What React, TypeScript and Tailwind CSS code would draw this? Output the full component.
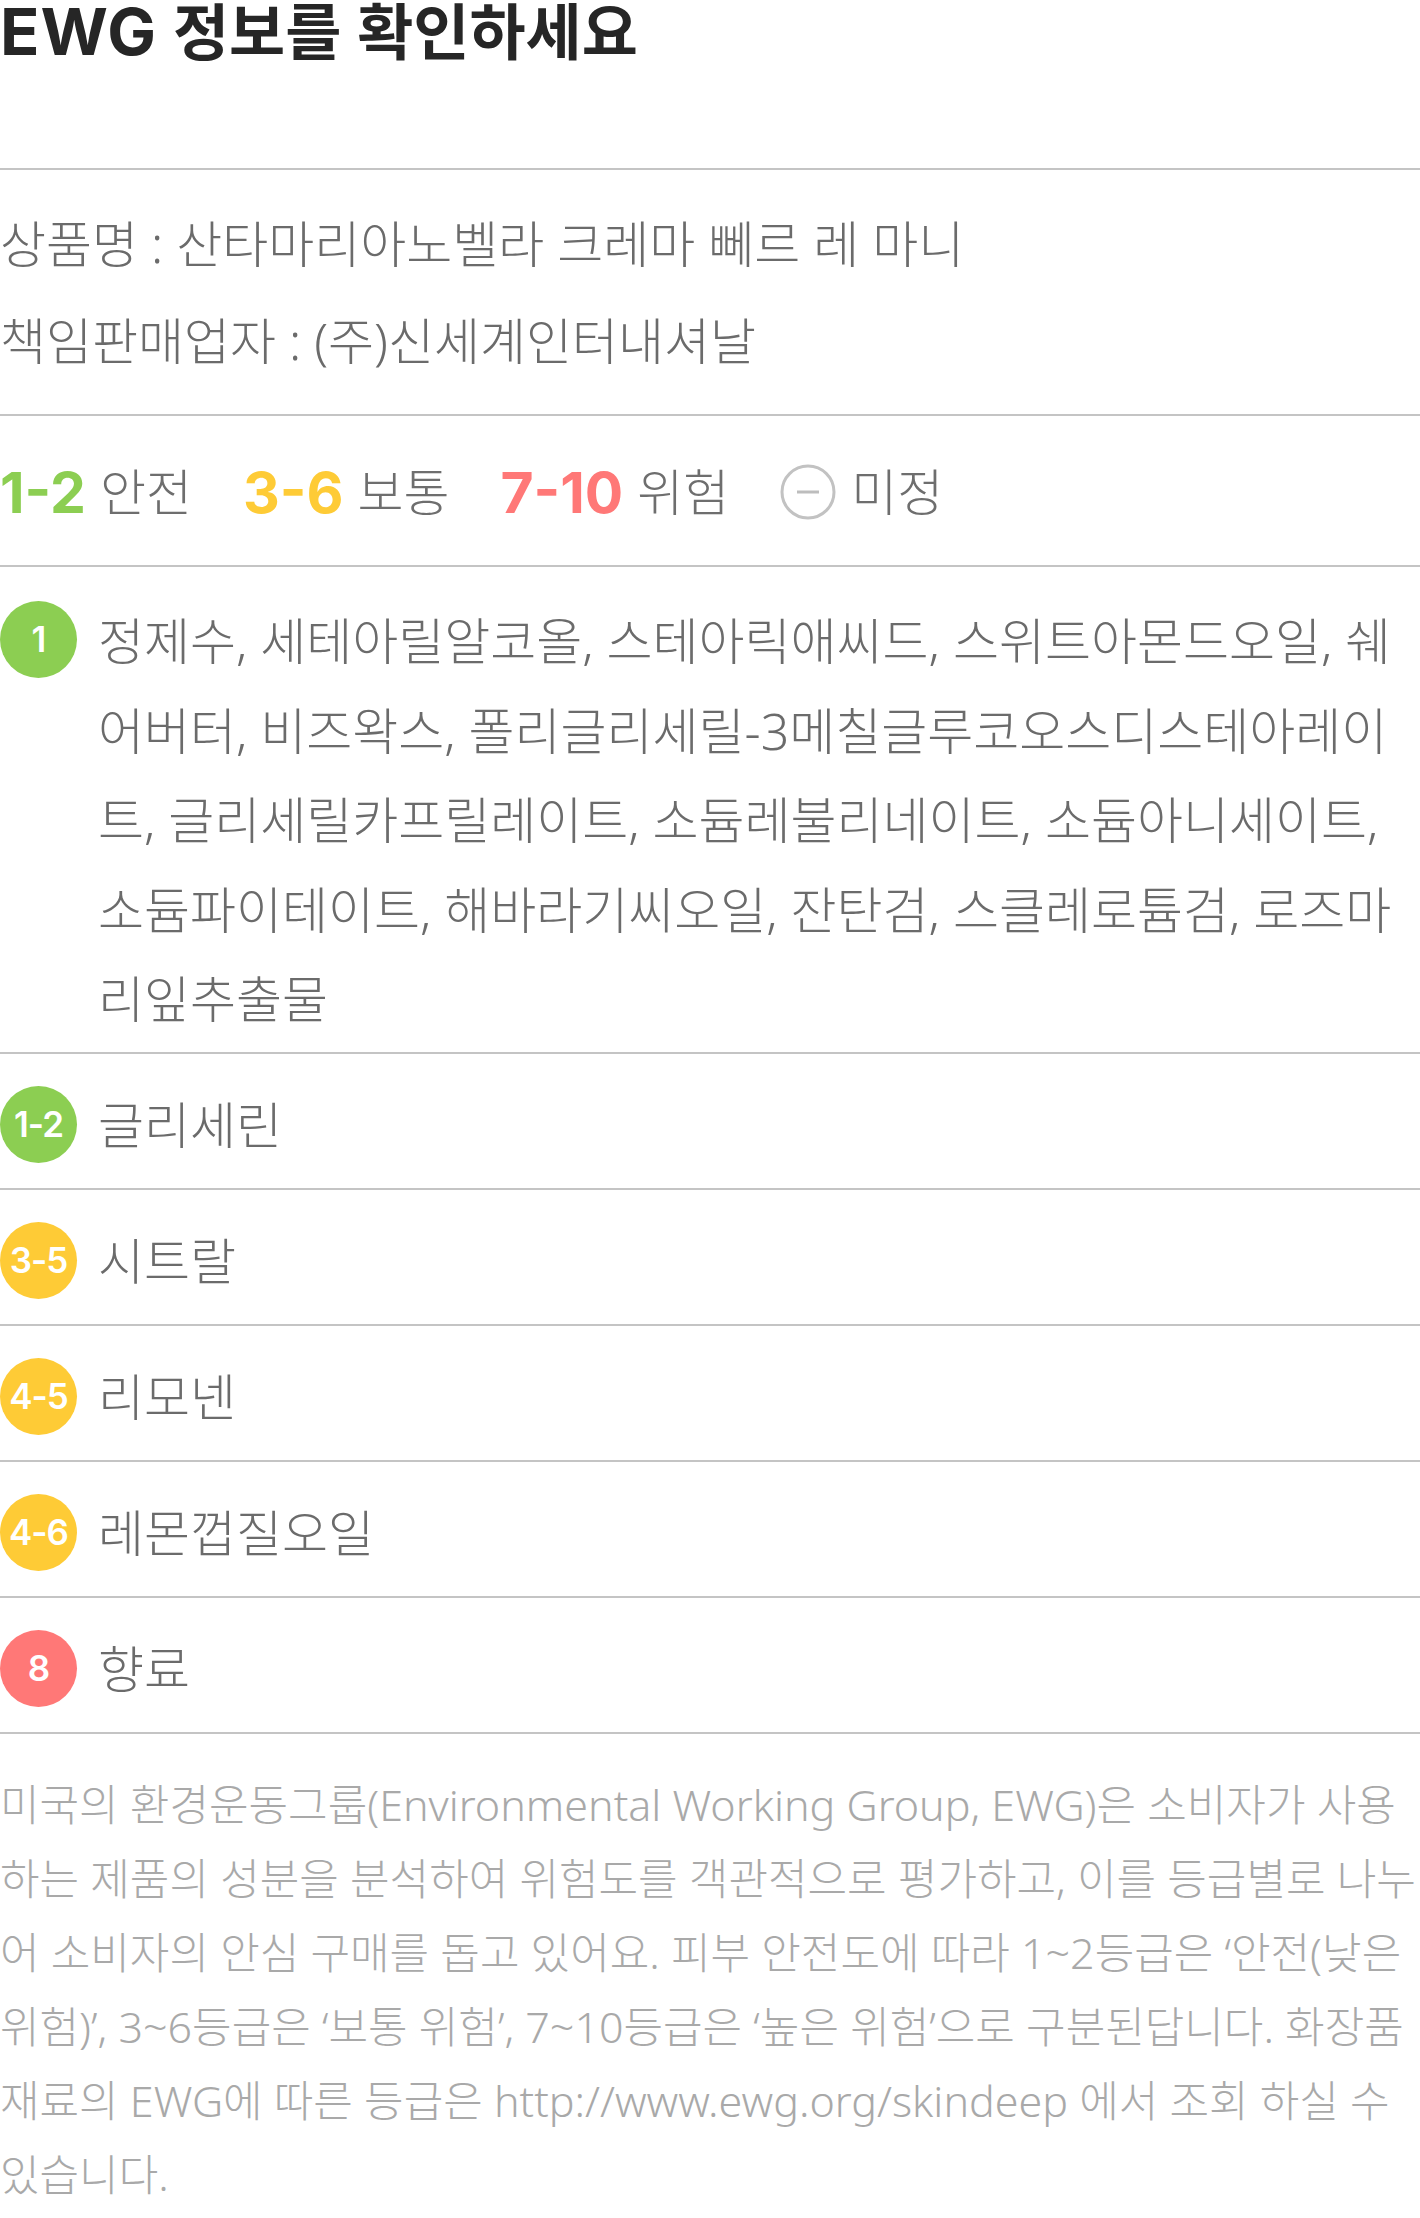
import React from "react";

const body = "font-['Noto_Sans','Noto_Sans_CJK_KR',sans-serif]";
const num = "font-['Inter','Noto_Sans',sans-serif]";

type Item = { grade: string; bg: string; name: string };

const items: Item[] = [
  { grade: "1-2", bg: "bg-[#8cce52]", name: "글리세린" },
  { grade: "3-5", bg: "bg-[#fecb36]", name: "시트랄" },
  { grade: "4-5", bg: "bg-[#fecb36]", name: "리모넨" },
  { grade: "4-6", bg: "bg-[#fecb36]", name: "레몬껍질오일" },
  { grade: "8", bg: "bg-[#ff7877]", name: "향료" },
];

function Badge({ grade, bg }: { grade: string; bg: string }) {
  return (
    <div
      className={`flex h-[77px] w-[77px] shrink-0 items-center justify-center rounded-full ${bg} ${num} text-[35px] font-semibold leading-none tracking-[-1px] text-white`}
    >
      {grade}
    </div>
  );
}

function Legend({ n, color, label }: { n: string; color: string; label: string }) {
  return (
    <div className="flex items-center gap-[14px]">
      <span className={`${num} text-[57px] font-bold leading-none ${color}`}>{n}</span>
      <span className="text-[50px] font-light leading-none text-[#6e6e6e]">{label}</span>
    </div>
  );
}

export default function App() {
  return (
    <div className={`w-[1420px] bg-white ${body}`}>
      <h1 className="h-[170px] border-b-2 border-[#c4c4c4] pt-[2px] text-[61px] font-bold leading-[60px] text-[#262626]">
        <span className={`${num} text-[65px] tracking-[1px]`}>EWG</span> 정보를 확인하세요
      </h1>

      <div className="border-b-2 border-[#c4c4c4] pb-[24px] pt-[26px] text-[50px] font-light leading-[97px] text-[#6b6b6b]">
        <p>상품명 : 산타마리아노벨라 크레마 뻬르 레 마니</p>
        <p>책임판매업자 : (주)신세계인터내셔날</p>
      </div>

      <div className="flex h-[151px] items-center gap-[51px] border-b-2 border-[#c4c4c4] pt-[3px]">
        <Legend n="1-2" color="text-[#8cce52]" label="안전" />
        <Legend n="3-6" color="text-[#fecb36]" label="보통" />
        <Legend n="7-10" color="text-[#ff7877]" label="위험" />
        <div className="flex items-center gap-[15px]">
          <svg width="56" height="56" viewBox="0 0 56 56">
            <circle cx="28" cy="28" r="26" fill="none" stroke="#c2c2c2" strokeWidth="3" />
            <line x1="17" y1="28" x2="39" y2="28" stroke="#bdbdbd" strokeWidth="3" />
          </svg>
          <span className="text-[50px] font-light leading-none text-[#6e6e6e]">미정</span>
        </div>
      </div>

      <div className="flex h-[487px] items-start gap-[21px] border-b-2 border-[#c4c4c4] pb-[9px] pt-[30px]">
        <div className="mt-[4px]">
          <Badge grade="1" bg="bg-[#8cce52]" />
        </div>
        <p className="flex-1 break-all text-[50px] font-light leading-[89.5px] text-[#6b6b6b]">
          정제수, 세테아릴알코올, 스테아릭애씨드, 스위트아몬드오일, 쉐어버터, 비즈왁스, 폴리글리세릴-3메칠글루코오스디스테아레이트, 글리세릴카프릴레이트, 소듐레불리네이트, 소듐아니세이트, 소듐파이테이트, 해바라기씨오일, 잔탄검, 스클레로튬검, 로즈마리잎추출물
        </p>
      </div>

      {items.map((it) => (
        <div
          key={it.name}
          className="flex h-[136px] items-center gap-[21px] border-b-2 border-[#c4c4c4] pt-[7px]"
        >
          <Badge grade={it.grade} bg={it.bg} />
          <span className="text-[50px] font-light leading-none text-[#6b6b6b]">{it.name}</span>
        </div>
      ))}

      <p className="whitespace-nowrap pt-[34px] text-[43px] font-light leading-[74px] text-[#a9a9a9]">
        미국의 환경운동그룹(Environmental Working Group, EWG)은 소비자가 사용
        <br />
        하는 제품의 성분을 분석하여 위험도를 객관적으로 평가하고, 이를 등급별로 나누
        <br />
        어 소비자의 안심 구매를 돕고 있어요. 피부 안전도에 따라 1~2등급은 ‘안전(낮은
        <br />
        위험)’, 3~6등급은 ‘보통 위험’, 7~10등급은 ‘높은 위험’으로 구분된답니다. 화장품
        <br />
        재료의 EWG에 따른 등급은 http://www.ewg.org/skindeep 에서 조회 하실 수
        <br />
        있습니다.
      </p>
    </div>
  );
}
